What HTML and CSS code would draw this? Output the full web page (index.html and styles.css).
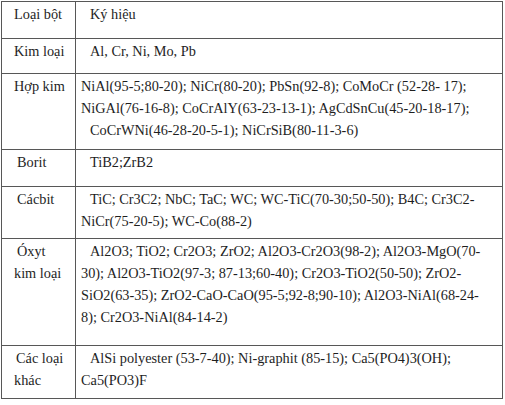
FILE: index.html
```html
<!DOCTYPE html>
<html>
<head>
<meta charset="utf-8">
<link rel="stylesheet" href="styles.css">
</head>
<body>
<div class="sheet">
  <div class="grid">
    <div class="cell c1"><div class="ln">Loại bột</div></div>
    <div class="cell c2"><div class="ln in">Ký hiệu</div></div>

    <div class="cell c1"><div class="ln">Kim loại</div></div>
    <div class="cell c2"><div class="ln in">Al, Cr, Ni, Mo, Pb</div></div>

    <div class="cell c1"><div class="ln">Hợp kim</div></div>
    <div class="cell c2">
      <div class="ln">NiAl(95-5;80-20); NiCr(80-20); PbSn(92-8); CoMoCr (52-28- 17);</div>
      <div class="ln">NiGAl(76-16-8); CoCrAlY(63-23-13-1); AgCdSnCu(45-20-18-17);</div>
      <div class="ln in">CoCrWNi(46-28-20-5-1); NiCrSiB(80-11-3-6)</div>
    </div>

    <div class="cell c1"><div class="ln sh">Borit</div></div>
    <div class="cell c2"><div class="ln in">TiB2;ZrB2</div></div>

    <div class="cell c1"><div class="ln sh">Cácbit</div></div>
    <div class="cell c2">
      <div class="ln in">TiC; Cr3C2; NbC; TaC; WC; WC-TiC(70-30;50-50); B4C; Cr3C2-</div>
      <div class="ln">NiCr(75-20-5); WC-Co(88-2)</div>
    </div>

    <div class="cell c1">
      <div class="ln sh">Óxyt</div>
      <div class="ln">kim loại</div>
    </div>
    <div class="cell c2">
      <div class="ln in">Al2O3; TiO2; Cr2O3; ZrO2; Al2O3-Cr2O3(98-2); Al2O3-MgO(70-</div>
      <div class="ln">30); Al2O3-TiO2(97-3; 87-13;60-40); Cr2O3-TiO2(50-50); ZrO2-</div>
      <div class="ln">SiO2(63-35); ZrO2-CaO-CaO(95-5;92-8;90-10); Al2O3-NiAl(68-24-</div>
      <div class="ln">8); Cr2O3-NiAl(84-14-2)</div>
    </div>

    <div class="cell c1">
      <div class="ln ks">Các loại</div>
      <div class="ln">khác</div>
    </div>
    <div class="cell c2">
      <div class="ln in">AlSi polyester (53-7-40); Ni-graphit (85-15); Ca5(PO4)3(OH);</div>
      <div class="ln">Ca5(PO3)F</div>
    </div>
  </div>
</div>
</body>
</html>
```

FILE: styles.css
```css
body {
  margin: 0;
  font-size: 14.3px;
  color: #1e1e1e;
  font-family: "Liberation Serif", "Times New Roman", serif;
}

.sheet {
  padding: 1px 0 0 1px;
}

.grid {
  display: grid;
  width: 501px;
  grid-template-columns: 74px 427px;
  grid-template-rows: 37px 35px 76px 37px 52px 107px 53px;
  border-top: 1px solid #575757;
  border-left: 1px solid #575757;
}

.cell {
  border-right: 1px solid #575757;
  border-bottom: 1px solid #575757;
  padding-top: 1px;
  overflow: hidden;
}

.c1 {
  padding-left: 12px;
}

.c2 {
  padding-left: 5px;
}

.ln {
  line-height: 22px;
  white-space: nowrap;
}

.in {
  padding-left: 9px;
}

.sh {
  padding-left: 3px;
}

.ks {
  padding-left: 2px;
}
```
